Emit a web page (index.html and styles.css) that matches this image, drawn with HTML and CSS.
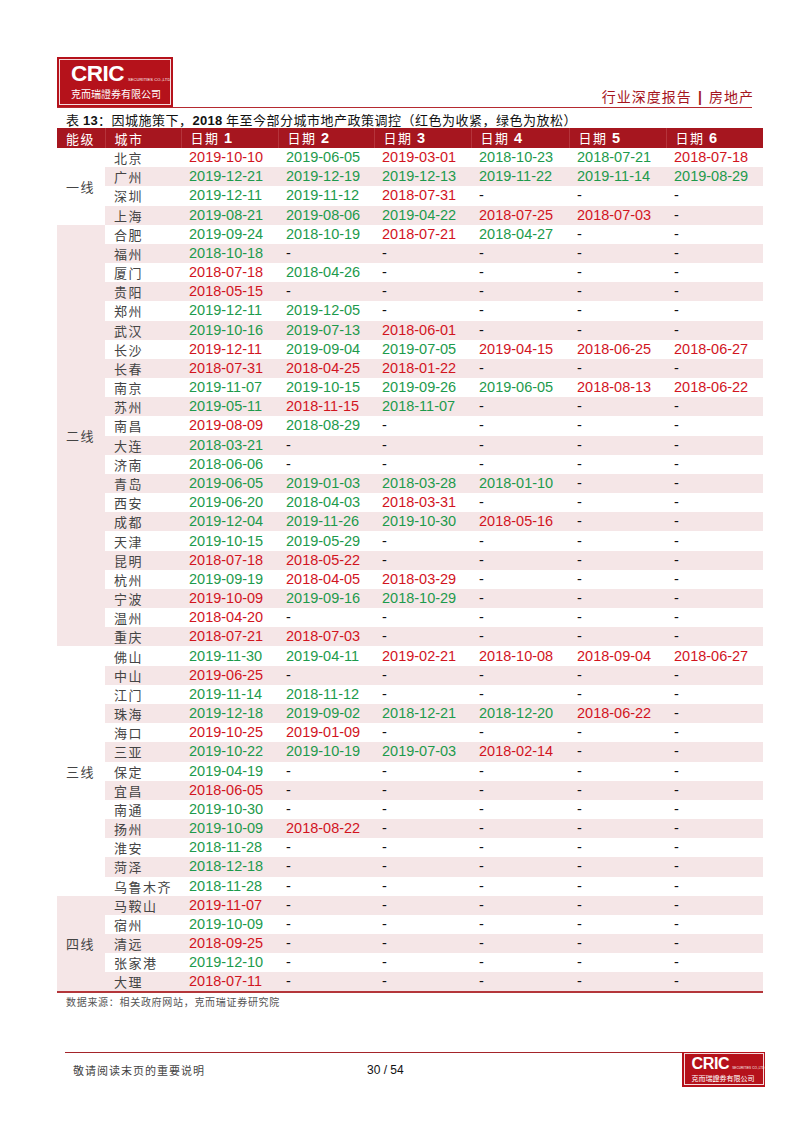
FILE: index.html
```html
<!DOCTYPE html>
<html lang="zh-CN">
<head>
<meta charset="utf-8">
<title>行业深度报告 | 房地产</title>
<link rel="stylesheet" href="styles.css">
</head>
<body>
<div class="page">
  <header class="top">
    <div class="logo">
      <div class="logo-in">
        <div class="logo-row"><span class="logo-cric">CRIC</span><span class="logo-sec">SECURITIES CO.,LTD</span></div>
        <div class="logo-cn">克而瑞證券有限公司</div>
      </div>
    </div>
    <div class="top-title">行业深度报告 <b class="bar">|</b> 房地产</div>
  </header>

  <div class="caption">表 <b>13</b>：因城施策下，<b>2018</b> 年至今部分城市地产政策调控（红色为收紧，绿色为放松）</div>

  <table class="policy">
    <colgroup>
      <col class="c-tier"><col class="c-city"><col class="c-d1"><col class="c-d2"><col class="c-d3"><col class="c-d4"><col class="c-d5"><col class="c-d6">
    </colgroup>
    <thead>
      <tr>
        <th>能级</th><th>城市</th><th>日期 <b>1</b></th><th>日期 <b>2</b></th><th>日期 <b>3</b></th><th>日期 <b>4</b></th><th>日期 <b>5</b></th><th>日期 <b>6</b></th>
      </tr>
    </thead>
    <tbody>
      <tr><td class="tier" rowspan="4">一线</td><td class="city">北京</td><td class="r">2019-10-10</td><td class="g">2019-06-05</td><td class="r">2019-03-01</td><td class="g">2018-10-23</td><td class="g">2018-07-21</td><td class="r">2018-07-18</td></tr>
      <tr class="p"><td class="city">广州</td><td class="g">2019-12-21</td><td class="g">2019-12-19</td><td class="g">2019-12-13</td><td class="g">2019-11-22</td><td class="g">2019-11-14</td><td class="g">2019-08-29</td></tr>
      <tr><td class="city">深圳</td><td class="g">2019-12-11</td><td class="g">2019-11-12</td><td class="r">2018-07-31</td><td>-</td><td>-</td><td>-</td></tr>
      <tr class="p"><td class="city">上海</td><td class="g">2019-08-21</td><td class="g">2019-08-06</td><td class="g">2019-04-22</td><td class="r">2018-07-25</td><td class="r">2018-07-03</td><td>-</td></tr>

      <tr><td class="tier tp" rowspan="22">二线</td><td class="city">合肥</td><td class="g">2019-09-24</td><td class="g">2018-10-19</td><td class="r">2018-07-21</td><td class="g">2018-04-27</td><td>-</td><td>-</td></tr>
      <tr class="p"><td class="city">福州</td><td class="g">2018-10-18</td><td>-</td><td>-</td><td>-</td><td>-</td><td>-</td></tr>
      <tr><td class="city">厦门</td><td class="r">2018-07-18</td><td class="g">2018-04-26</td><td>-</td><td>-</td><td>-</td><td>-</td></tr>
      <tr class="p"><td class="city">贵阳</td><td class="r">2018-05-15</td><td>-</td><td>-</td><td>-</td><td>-</td><td>-</td></tr>
      <tr><td class="city">郑州</td><td class="g">2019-12-11</td><td class="g">2019-12-05</td><td>-</td><td>-</td><td>-</td><td>-</td></tr>
      <tr class="p"><td class="city">武汉</td><td class="g">2019-10-16</td><td class="g">2019-07-13</td><td class="r">2018-06-01</td><td>-</td><td>-</td><td>-</td></tr>
      <tr><td class="city">长沙</td><td class="r">2019-12-11</td><td class="g">2019-09-04</td><td class="g">2019-07-05</td><td class="r">2019-04-15</td><td class="r">2018-06-25</td><td class="r">2018-06-27</td></tr>
      <tr class="p"><td class="city">长春</td><td class="r">2018-07-31</td><td class="r">2018-04-25</td><td class="r">2018-01-22</td><td>-</td><td>-</td><td>-</td></tr>
      <tr><td class="city">南京</td><td class="g">2019-11-07</td><td class="g">2019-10-15</td><td class="g">2019-09-26</td><td class="g">2019-06-05</td><td class="r">2018-08-13</td><td class="r">2018-06-22</td></tr>
      <tr class="p"><td class="city">苏州</td><td class="g">2019-05-11</td><td class="r">2018-11-15</td><td class="g">2018-11-07</td><td>-</td><td>-</td><td>-</td></tr>
      <tr><td class="city">南昌</td><td class="r">2019-08-09</td><td class="g">2018-08-29</td><td>-</td><td>-</td><td>-</td><td>-</td></tr>
      <tr class="p"><td class="city">大连</td><td class="g">2018-03-21</td><td>-</td><td>-</td><td>-</td><td>-</td><td>-</td></tr>
      <tr><td class="city">济南</td><td class="g">2018-06-06</td><td>-</td><td>-</td><td>-</td><td>-</td><td>-</td></tr>
      <tr class="p"><td class="city">青岛</td><td class="g">2019-06-05</td><td class="g">2019-01-03</td><td class="g">2018-03-28</td><td class="g">2018-01-10</td><td>-</td><td>-</td></tr>
      <tr><td class="city">西安</td><td class="g">2019-06-20</td><td class="g">2018-04-03</td><td class="r">2018-03-31</td><td>-</td><td>-</td><td>-</td></tr>
      <tr class="p"><td class="city">成都</td><td class="g">2019-12-04</td><td class="g">2019-11-26</td><td class="g">2019-10-30</td><td class="r">2018-05-16</td><td>-</td><td>-</td></tr>
      <tr><td class="city">天津</td><td class="g">2019-10-15</td><td class="g">2019-05-29</td><td>-</td><td>-</td><td>-</td><td>-</td></tr>
      <tr class="p"><td class="city">昆明</td><td class="r">2018-07-18</td><td class="r">2018-05-22</td><td>-</td><td>-</td><td>-</td><td>-</td></tr>
      <tr><td class="city">杭州</td><td class="g">2019-09-19</td><td class="r">2018-04-05</td><td class="r">2018-03-29</td><td>-</td><td>-</td><td>-</td></tr>
      <tr class="p"><td class="city">宁波</td><td class="r">2019-10-09</td><td class="g">2019-09-16</td><td class="g">2018-10-29</td><td>-</td><td>-</td><td>-</td></tr>
      <tr><td class="city">温州</td><td class="r">2018-04-20</td><td>-</td><td>-</td><td>-</td><td>-</td><td>-</td></tr>
      <tr class="p"><td class="city">重庆</td><td class="r">2018-07-21</td><td class="r">2018-07-03</td><td>-</td><td>-</td><td>-</td><td>-</td></tr>

      <tr><td class="tier" rowspan="13">三线</td><td class="city">佛山</td><td class="g">2019-11-30</td><td class="g">2019-04-11</td><td class="r">2019-02-21</td><td class="r">2018-10-08</td><td class="r">2018-09-04</td><td class="r">2018-06-27</td></tr>
      <tr class="p"><td class="city">中山</td><td class="r">2019-06-25</td><td>-</td><td>-</td><td>-</td><td>-</td><td>-</td></tr>
      <tr><td class="city">江门</td><td class="g">2019-11-14</td><td class="g">2018-11-12</td><td>-</td><td>-</td><td>-</td><td>-</td></tr>
      <tr class="p"><td class="city">珠海</td><td class="g">2019-12-18</td><td class="g">2019-09-02</td><td class="g">2018-12-21</td><td class="g">2018-12-20</td><td class="r">2018-06-22</td><td>-</td></tr>
      <tr><td class="city">海口</td><td class="r">2019-10-25</td><td class="r">2019-01-09</td><td>-</td><td>-</td><td>-</td><td>-</td></tr>
      <tr class="p"><td class="city">三亚</td><td class="g">2019-10-22</td><td class="g">2019-10-19</td><td class="g">2019-07-03</td><td class="r">2018-02-14</td><td>-</td><td>-</td></tr>
      <tr><td class="city">保定</td><td class="g">2019-04-19</td><td>-</td><td>-</td><td>-</td><td>-</td><td>-</td></tr>
      <tr class="p"><td class="city">宜昌</td><td class="r">2018-06-05</td><td>-</td><td>-</td><td>-</td><td>-</td><td>-</td></tr>
      <tr><td class="city">南通</td><td class="g">2019-10-30</td><td>-</td><td>-</td><td>-</td><td>-</td><td>-</td></tr>
      <tr class="p"><td class="city">扬州</td><td class="g">2019-10-09</td><td class="r">2018-08-22</td><td>-</td><td>-</td><td>-</td><td>-</td></tr>
      <tr><td class="city">淮安</td><td class="g">2018-11-28</td><td>-</td><td>-</td><td>-</td><td>-</td><td>-</td></tr>
      <tr class="p"><td class="city">菏泽</td><td class="g">2018-12-18</td><td>-</td><td>-</td><td>-</td><td>-</td><td>-</td></tr>
      <tr><td class="city">乌鲁木齐</td><td class="g">2018-11-28</td><td>-</td><td>-</td><td>-</td><td>-</td><td>-</td></tr>

      <tr class="p"><td class="tier tp" rowspan="5">四线</td><td class="city">马鞍山</td><td class="r">2019-11-07</td><td>-</td><td>-</td><td>-</td><td>-</td><td>-</td></tr>
      <tr><td class="city">宿州</td><td class="g">2019-10-09</td><td>-</td><td>-</td><td>-</td><td>-</td><td>-</td></tr>
      <tr class="p"><td class="city">清远</td><td class="r">2018-09-25</td><td>-</td><td>-</td><td>-</td><td>-</td><td>-</td></tr>
      <tr><td class="city">张家港</td><td class="g">2019-12-10</td><td>-</td><td>-</td><td>-</td><td>-</td><td>-</td></tr>
      <tr class="p"><td class="city">大理</td><td class="r">2018-07-11</td><td>-</td><td>-</td><td>-</td><td>-</td><td>-</td></tr>
    </tbody>
  </table>

  <div class="source">数据来源：相关政府网站，克而瑞证券研究院</div>

  <footer class="foot">
    <div class="foot-note">敬请阅读末页的重要说明</div>
    <div class="foot-page">30 / 54</div>
    <div class="logo logo-sm">
      <div class="logo-in">
        <div class="logo-row"><span class="logo-cric">CRIC</span><span class="logo-sec">SECURITIES CO.,LTD</span></div>
        <div class="logo-cn">克而瑞證券有限公司</div>
      </div>
    </div>
  </footer>
</div>
</body>
</html>
```

FILE: styles.css
```css
* { box-sizing: border-box; }

html, body {
  margin: 0;
  padding: 0;
  background: #ffffff;
}

body {
  font-family: "Liberation Sans", "Noto Sans CJK SC", sans-serif;
  color: #222;
}

.page {
  width: 800px;
  height: 1131px;
  padding: 57px 0 0 57px;
  overflow: hidden;
}

/* ---------- top header ---------- */
.top {
  width: 695px;
  display: flex;
  justify-content: space-between;
  align-items: flex-end;
  border-bottom: 1px solid #b52a30;
}

.logo {
  width: 116px;
  height: 50px;
  background: #b5121b;
  padding: 2px;
}

.logo-in {
  width: 100%;
  height: 100%;
  border: 1px solid rgba(255, 255, 255, 0.85);
  padding: 2px 0 0 11px;
  color: #fff;
}

.logo-row {
  display: flex;
  align-items: baseline;
  height: 23px;
}

.logo-cric {
  font-family: "Liberation Sans", sans-serif;
  font-weight: 700;
  font-size: 22.5px;
  line-height: 23px;
  letter-spacing: -0.5px;
}

.logo-sec {
  font-size: 4px;
  line-height: 4px;
  margin-left: 4px;
  white-space: nowrap;
  letter-spacing: 0.1px;
}

.logo-cn {
  font-family: "Noto Sans CJK TC", "Noto Sans CJK SC", sans-serif;
  font-size: 10px;
  line-height: 12px;
  margin-top: 3px;
  white-space: nowrap;
}

.top-title {
  font-family: "Noto Sans CJK SC", sans-serif;
  font-size: 14px;
  line-height: 18px;
  letter-spacing: 1px;
  color: #a5151d;
  padding-bottom: 1px;
  margin-right: -2px;
}

.top-title .bar {
  font-family: "Liberation Sans", sans-serif;
  font-weight: 700;
  margin: 0 2px;
}

/* ---------- caption ---------- */
.caption {
  margin-top: 4px;
  padding-left: 9px;
  height: 16px;
  font-family: "Noto Sans CJK SC", sans-serif;
  font-size: 13px;
  line-height: 16px;
  letter-spacing: 0.5px;
  color: #111;
  white-space: nowrap;
}

.caption b {
  font-family: "Liberation Sans", sans-serif;
  font-weight: 700;
  font-size: 13px;
  letter-spacing: 0.3px;
}

/* ---------- table ---------- */
.policy {
  width: 706px;
  border-collapse: collapse;
  table-layout: fixed;
  border-bottom: 2px solid #b4363a;
}

.c-tier { width: 48px; }
.c-city { width: 76px; }
.c-d1 { width: 97px; }
.c-d2 { width: 96px; }
.c-d3 { width: 97px; }
.c-d4 { width: 98px; }
.c-d5 { width: 97px; }
.c-d6 { width: 97px; }

.policy th {
  background: #a6161f;
  color: #fff;
  height: 19px;
  padding: 0 0 0 9px;
  text-align: left;
  font-family: "Noto Sans CJK SC", sans-serif;
  font-weight: 400;
  font-size: 13px;
  line-height: 19px;
  letter-spacing: 1.5px;
  border-left: 1px solid #b5343b;
  white-space: nowrap;
}

.policy th:first-child {
  border-left: none;
}

.policy th b {
  font-family: "Liberation Sans", sans-serif;
  font-weight: 700;
  font-size: 14.5px;
  letter-spacing: 0;
}

.policy td {
  height: 19.18px;
  padding: 0 0 0 8px;
  font-size: 14.5px;
  line-height: 19px;
  color: #111;
  white-space: nowrap;
}

.policy tr.p td {
  background: #f5e6e7;
}

.policy td.tier {
  background: #fff;
  padding-left: 9px;
  font-family: "Noto Sans CJK SC", sans-serif;
  font-size: 13px;
  letter-spacing: 1.5px;
  color: #444;
  vertical-align: middle;
}

.policy tr td.tier.tp {
  background: #f5e6e7;
}

.policy tr.p td.tier:not(.tp) {
  background: #fff;
}

.policy td.city {
  padding-left: 9px;
  font-family: "Noto Sans CJK SC", sans-serif;
  font-size: 13px;
  letter-spacing: 1.5px;
  color: #444;
}

.policy td.r { color: #d2141e; }
.policy td.g { color: #1d9a4c; }

/* ---------- source ---------- */
.source {
  margin-top: 2px;
  padding-left: 9px;
  font-family: "Noto Sans CJK SC", sans-serif;
  font-size: 10px;
  line-height: 14px;
  letter-spacing: 0.7px;
  color: #555;
}

/* ---------- footer ---------- */
.foot {
  margin: 43px 0 0 8px;
  width: 700px;
  border-top: 1.5px solid #a4242a;
  display: flex;
  align-items: flex-start;
}

.foot-note {
  font-family: "Noto Sans CJK SC", sans-serif;
  font-size: 11px;
  letter-spacing: 1px;
  line-height: 14px;
  color: #444;
  margin: 10px 0 0 8px;
  width: 294px;
}

.foot-page {
  font-size: 12px;
  line-height: 14px;
  color: #111;
  margin-top: 10px;
}

.logo-sm {
  margin-left: auto;
  margin-top: -1.5px;
  width: 83px;
  height: 35px;
  padding: 1.5px;
}

.logo-sm .logo-in {
  padding: 1.5px 0 0 7px;
}

.logo-sm .logo-row {
  height: 16.5px;
}

.logo-sm .logo-cric {
  font-size: 16px;
  line-height: 16.5px;
  letter-spacing: -0.35px;
}

.logo-sm .logo-sec {
  font-size: 3px;
  line-height: 3px;
  margin-left: 3px;
}

.logo-sm .logo-cn {
  font-size: 7px;
  line-height: 8.5px;
  margin-top: 2px;
}
```
